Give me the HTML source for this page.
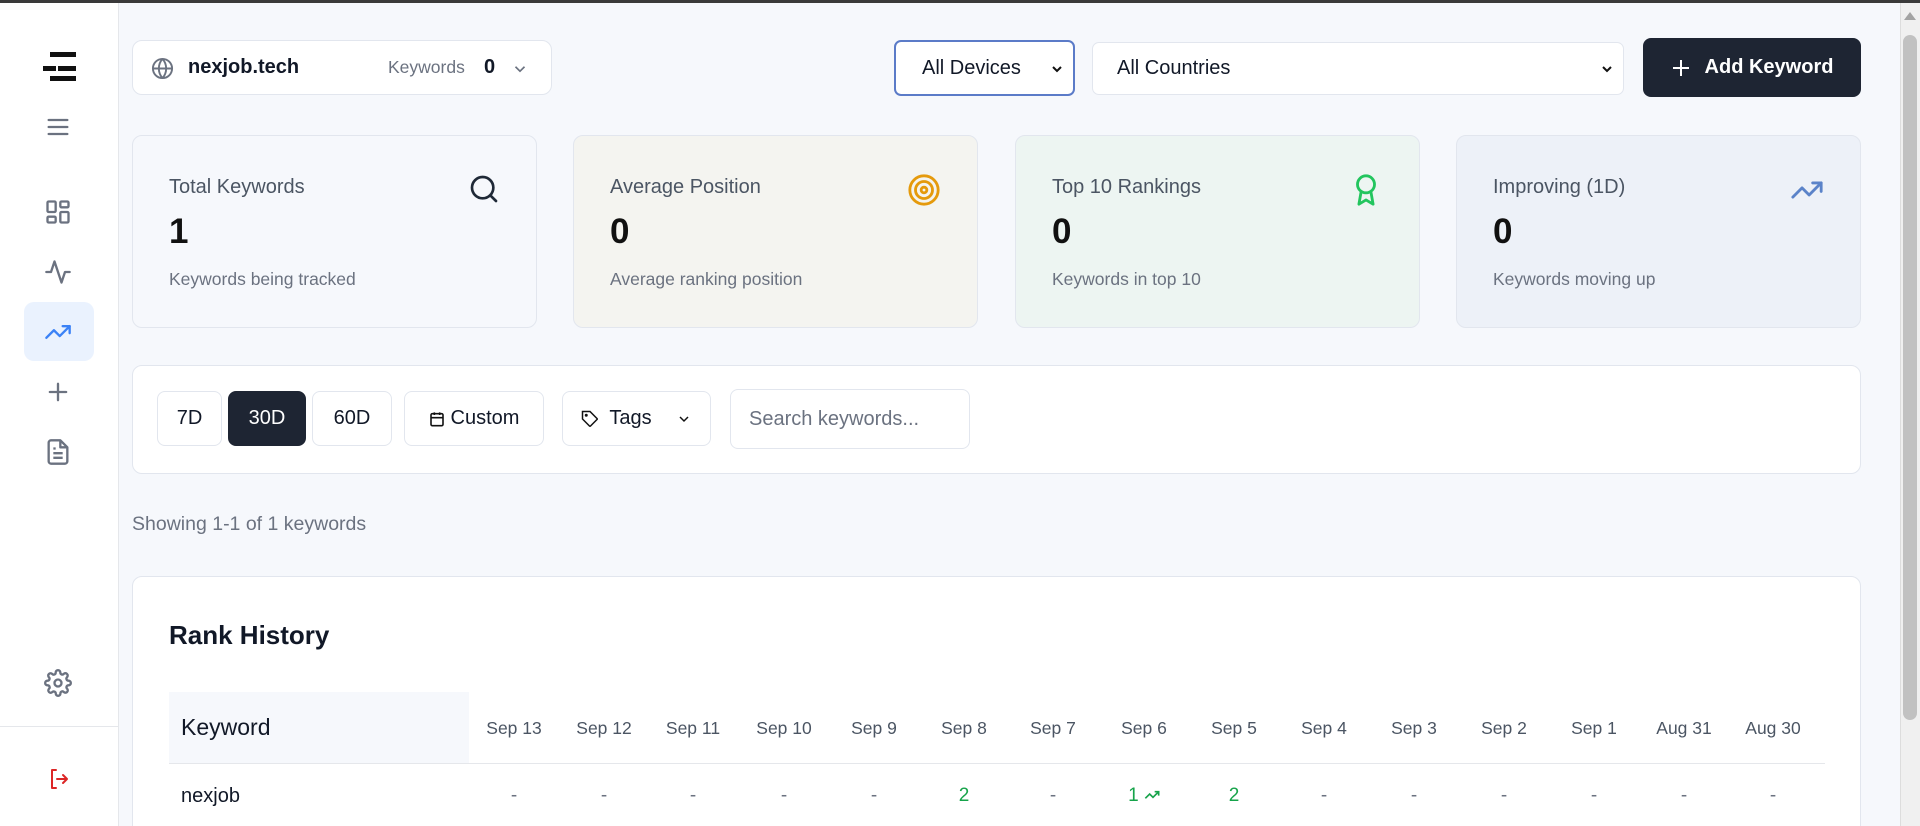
<!DOCTYPE html>
<html style="overflow:hidden;height:826px"><head><meta charset="utf-8"><style>
*{box-sizing:border-box;margin:0;padding:0}
body{width:1920px;height:826px;overflow:hidden;background:#f6f8fc;font-family:"Liberation Sans",sans-serif;color:#111827;position:relative}
.abs{position:absolute}
.top{left:0;top:0;width:1920px;height:3px;background:#3a3a3a}
.side{left:0;top:3px;width:119px;height:823px;background:#fff;border-right:1px solid #e5e7eb}
.ic{position:absolute;left:44px;width:28px;height:28px}
.box{position:absolute;background:#fff;border:1px solid #e2e6ee;border-radius:10px}
.card{position:absolute;top:135px;height:193px;width:405px;border:1px solid #e2e6ee;border-radius:10px}
.card .t{position:absolute;left:36px;top:40px;font-size:20px;color:#4b5563}
.card .n{position:absolute;left:36px;top:76px;font-size:35px;font-weight:bold;color:#111}
.card .s{position:absolute;left:36px;top:133px;font-size:17.5px;color:#6b7280}
.card svg{position:absolute;right:36px;top:37px}
.btn{position:absolute;top:391px;height:55px;border:1px solid #e2e6ee;border-radius:8px;background:#fff;font-size:20px;display:flex;align-items:center;justify-content:center;gap:6px}
.dh{position:absolute;top:718px;font-size:17.5px;color:#4b5563;width:90px;text-align:center}
.dv{position:absolute;top:785px;font-size:19px;color:#6b7280;width:90px;text-align:center}
.g{color:#16a34a}
</style></head><body>
<div class="abs top"></div>
<div class="abs side">
<svg class="ic" style="left:40px;top:37px;width:40px;height:45px" viewBox="0 0 40 45"><rect x="10" y="12" width="26" height="5" fill="#111"/><rect x="3" y="26" width="13" height="5" fill="#111"/><rect x="18" y="26" width="18" height="5" fill="#111"/><rect x="10" y="36" width="26" height="5" fill="#111"/></svg>
<svg class="ic" style="top:110px" viewBox="0 0 24 24" fill="none" stroke="#6b7280" stroke-width="2" stroke-linecap="round"><path d="M4 6h16M4 12h16M4 18h16"/></svg>
<svg class="ic" style="top:195px" viewBox="0 0 24 24" fill="none" stroke="#6b7280" stroke-width="2"><rect x="3" y="3" width="7" height="9" rx="1"/><rect x="14" y="3" width="7" height="5" rx="1"/><rect x="14" y="12" width="7" height="9" rx="1"/><rect x="3" y="16" width="7" height="5" rx="1"/></svg>
<svg class="ic" style="top:255px" viewBox="0 0 24 24" fill="none" stroke="#6b7280" stroke-width="2" stroke-linecap="round" stroke-linejoin="round"><path d="M22 12h-4l-3 9L9 3l-3 9H2"/></svg>
<div style="position:absolute;left:24px;top:299px;width:70px;height:59px;background:#eaf2fe;border-radius:10px"></div>
<svg class="ic" style="top:315px" viewBox="0 0 24 24" fill="none" stroke="#3b82f6" stroke-width="2" stroke-linecap="round" stroke-linejoin="round"><path d="M22 7l-8.5 8.5-5-5L2 17"/><path d="M16 7h6v6"/></svg>
<svg class="ic" style="top:375px" viewBox="0 0 24 24" fill="none" stroke="#6b7280" stroke-width="2" stroke-linecap="round"><path d="M12 5v14M5 12h14"/></svg>
<svg class="ic" style="top:435px" viewBox="0 0 24 24" fill="none" stroke="#6b7280" stroke-width="2" stroke-linejoin="round"><path d="M14 2H6a2 2 0 0 0-2 2v16a2 2 0 0 0 2 2h12a2 2 0 0 0 2-2V8z"/><path d="M14 2v6h6M16 13H8M16 17H8M10 9H8"/></svg>
<svg class="ic" style="top:666px" viewBox="0 0 24 24" fill="none" stroke="#6b7280" stroke-width="2"><circle cx="12" cy="12" r="3"/><path d="M19.4 15a1.65 1.65 0 0 0 .33 1.820l.06.06a2 2 0 1 1-2.83 2.83l-.06-.06a1.65 1.65 0 0 0-1.82-.33 1.65 1.65 0 0 0-1 1.51V21a2 2 0 1 1-4 0v-.09A1.65 1.65 0 0 0 9 19.4a1.65 1.65 0 0 0-1.82.33l-.06.06a2 2 0 1 1-2.83-2.830l.06-.06A1.65 1.65 0 0 0 4.68 15a1.65 1.65 0 0 0-1.51-1H3a2 2 0 1 1 0-4h.09A1.65 1.65 0 0 0 4.6 9a1.65 1.65 0 0 0-.33-1.82l-.06-.06a2 2 0 1 1 2.83-2.83l.06.06A1.65 1.65 0 0 0 9 4.68a1.65 1.65 0 0 0 1-1.51V3a2 2 0 1 1 4 0v.09a1.65 1.65 0 0 0 1 1.51 1.65 1.65 0 0 0 1.82-.33l.06-.06a2 2 0 1 1 2.83 2.83l-.06.06A1.65 1.65 0 0 0 19.4 9a1.65 1.65 0 0 0 1.51 1H21a2 2 0 1 1 0 4h-.09a1.65 1.65 0 0 0-1.51 1z"/></svg>
<div style="position:absolute;left:0;top:723px;width:118px;height:1px;background:#e5e7eb"></div>
<svg class="ic" style="top:764px;width:24px;height:24px;left:47px" viewBox="0 0 24 24" fill="none" stroke="#dc2626" stroke-width="2" stroke-linecap="round" stroke-linejoin="round"><path d="M9 3H5v18h4M10 12h10M16 8l4 4-4 4"/></svg>
</div>
<div class="abs" style="left:1900px;top:3px;width:20px;height:823px;background:#f0f0f0;border-left:1px solid #ddd"></div>
<div class="abs" style="left:1903px;top:35px;width:14px;height:685px;background:#c1c1c1;border-radius:7px"></div>
<div class="abs" style="left:1904px;top:12px;width:0;height:0;border-left:6px solid transparent;border-right:6px solid transparent;border-bottom:8px solid #a3a3a3"></div>

<div class="box" style="left:132px;top:40px;width:420px;height:55px;display:flex;align-items:center">
<svg style="position:absolute;left:18px;top:16px" width="23" height="23" viewBox="0 0 24 24" fill="none" stroke="#6b7280" stroke-width="2"><circle cx="12" cy="12" r="10"/><path d="M2 12h20M12 2a15 15 0 0 1 0 20M12 2a15 15 0 0 0 0 20"/></svg>
<span style="position:absolute;left:55px;font-size:20px;font-weight:bold">nexjob.tech</span>
<span style="position:absolute;left:255px;font-size:17.5px;color:#6b7280">Keywords</span>
<span style="position:absolute;left:351px;font-size:20px;font-weight:bold">0</span>
<svg style="position:absolute;left:378px;top:19px" width="18" height="18" viewBox="0 0 24 24" fill="none" stroke="#6b7280" stroke-width="2.2"><path d="M6 9l6 6 6-6"/></svg>
</div>
<div class="abs" style="left:894px;top:40px;width:181px;height:56px;border:2px solid #5b7bc8;border-radius:7px;background:#fff;font-size:20px;display:flex;align-items:center;padding-left:26px">All Devices
<svg style="position:absolute;right:8px;top:19px" width="16" height="16" viewBox="0 0 24 24" fill="none" stroke="#111" stroke-width="3"><path d="M6 9l6 6 6-6"/></svg></div>
<div class="abs" style="left:1092px;top:42px;width:532px;height:53px;border:1px solid #e2e6ee;border-radius:7px;background:#fff;font-size:20px;display:flex;align-items:center;padding-left:24px">All Countries
<svg style="position:absolute;right:8px;top:18px" width="16" height="16" viewBox="0 0 24 24" fill="none" stroke="#111" stroke-width="3"><path d="M6 9l6 6 6-6"/></svg></div>
<div class="abs" style="left:1643px;top:38px;width:218px;height:59px;background:#1e2533;border-radius:8px;color:#fff;font-size:20px;font-weight:bold;display:flex;align-items:center;justify-content:center;gap:14px">
<svg width="20" height="20" viewBox="0 0 20 20" stroke="#fff" stroke-width="2"><path d="M10 2v16M2 10h16"/></svg>Add Keyword</div>

<div class="card" style="left:132px;background:#f6f8fc"><div class="t">Total Keywords</div><div class="n">1</div><div class="s">Keywords being tracked</div>
<svg width="32" height="32" viewBox="0 0 24 24" fill="none" stroke="#1f2937" stroke-width="2" stroke-linecap="round"><circle cx="11" cy="11" r="8"/><path d="M21 21l-4.3-4.3"/></svg></div>
<div class="card" style="left:573px;background:#f4f4f0"><div class="t">Average Position</div><div class="n">0</div><div class="s">Average ranking position</div>
<svg width="34" height="34" viewBox="0 0 24 24" fill="none" stroke="#e59a0c" stroke-width="2"><circle cx="12" cy="12" r="10"/><circle cx="12" cy="12" r="6"/><circle cx="12" cy="12" r="2"/></svg></div>
<div class="card" style="left:1015px;background:#edf5f2"><div class="t">Top 10 Rankings</div><div class="n">0</div><div class="s">Keywords in top 10</div>
<svg width="34" height="34" viewBox="0 0 24 24" fill="none" stroke="#22c55e" stroke-width="2" stroke-linejoin="round"><circle cx="12" cy="8" r="6"/><path d="M15.5 13.5L17 22l-5-3-5 3 1.5-8.5"/></svg></div>
<div class="card" style="left:1456px;background:#edf1f8"><div class="t">Improving (1D)</div><div class="n">0</div><div class="s">Keywords moving up</div>
<svg width="34" height="34" viewBox="0 0 24 24" fill="none" stroke="#5b83c9" stroke-width="2" stroke-linecap="round" stroke-linejoin="round"><path d="M22 7l-8.5 8.5-5-5L2 17"/><path d="M16 7h6v6"/></svg></div>

<div class="box" style="left:132px;top:365px;width:1729px;height:109px"></div>
<div class="btn" style="left:157px;width:65px">7D</div>
<div class="btn" style="left:228px;width:78px;background:#1e2533;color:#fff;border-color:#1e2533">30D</div>
<div class="btn" style="left:312px;width:80px">60D</div>
<div class="btn" style="left:404px;width:140px"><svg width="16" height="16" viewBox="0 0 24 24" fill="none" stroke="#111" stroke-width="2.4"><rect x="3" y="4" width="18" height="18" rx="2"/><path d="M16 2v4M8 2v4M3 10h18"/></svg>Custom</div>
<div class="btn" style="left:562px;width:149px;gap:10px"><svg width="18" height="18" viewBox="0 0 24 24" fill="none" stroke="#111" stroke-width="2"><path d="M12 2H2v10l9.3 9.3a1 1 0 0 0 1.4 0l8.6-8.6a1 1 0 0 0 0-1.4z"/><circle cx="7" cy="7" r="1"/></svg>Tags<svg style="margin-left:14px" width="16" height="16" viewBox="0 0 24 24" fill="none" stroke="#111" stroke-width="2.2"><path d="M6 9l6 6 6-6"/></svg></div>
<div class="btn" style="left:730px;top:389px;height:60px;width:240px;justify-content:flex-start;padding-left:18px;color:#6b7280">Search keywords...</div>

<div class="abs" style="left:132px;top:513px;font-size:19.5px;color:#6b7280">Showing 1-1 of 1 keywords</div>

<div class="box" style="left:132px;top:576px;width:1729px;height:270px"></div>
<div class="abs" style="left:169px;top:620px;font-size:26px;font-weight:bold">Rank History</div>
<div class="abs" style="left:169px;top:692px;width:300px;height:71px;background:#f6f8fc"></div>
<div class="abs" style="left:181px;top:714px;font-size:23px">Keyword</div>
<div class="abs" style="left:169px;top:763px;width:1656px;height:1px;background:#e5e7eb"></div>
<div class="abs" style="left:181px;top:785px;font-size:20px">nexjob</div>

<div class="dh" style="left:469px">Sep 13</div><div class="dh" style="left:559px">Sep 12</div><div class="dh" style="left:648px">Sep 11</div><div class="dh" style="left:739px">Sep 10</div><div class="dh" style="left:829px">Sep 9</div><div class="dh" style="left:919px">Sep 8</div><div class="dh" style="left:1008px">Sep 7</div><div class="dh" style="left:1099px">Sep 6</div><div class="dh" style="left:1189px">Sep 5</div><div class="dh" style="left:1279px">Sep 4</div><div class="dh" style="left:1369px">Sep 3</div><div class="dh" style="left:1459px">Sep 2</div><div class="dh" style="left:1549px">Sep 1</div><div class="dh" style="left:1639px">Aug 31</div><div class="dh" style="left:1728px">Aug 30</div>

<div class="dv" style="left:469px">-</div><div class="dv" style="left:559px">-</div><div class="dv" style="left:648px">-</div><div class="dv" style="left:739px">-</div><div class="dv" style="left:829px">-</div><div class="dv g" style="left:919px">2</div><div class="dv" style="left:1008px">-</div><div class="dv g" style="left:1099px">1 <svg width="16" height="12" viewBox="0 0 24 16" fill="none" stroke="#16a34a" stroke-width="2.5"><path d="M22 3l-8.5 8.5-5-5L2 13M16 3h6v6"/></svg></div><div class="dv g" style="left:1189px">2</div><div class="dv" style="left:1279px">-</div><div class="dv" style="left:1369px">-</div><div class="dv" style="left:1459px">-</div><div class="dv" style="left:1549px">-</div><div class="dv" style="left:1639px">-</div><div class="dv" style="left:1728px">-</div>
</body></html>
